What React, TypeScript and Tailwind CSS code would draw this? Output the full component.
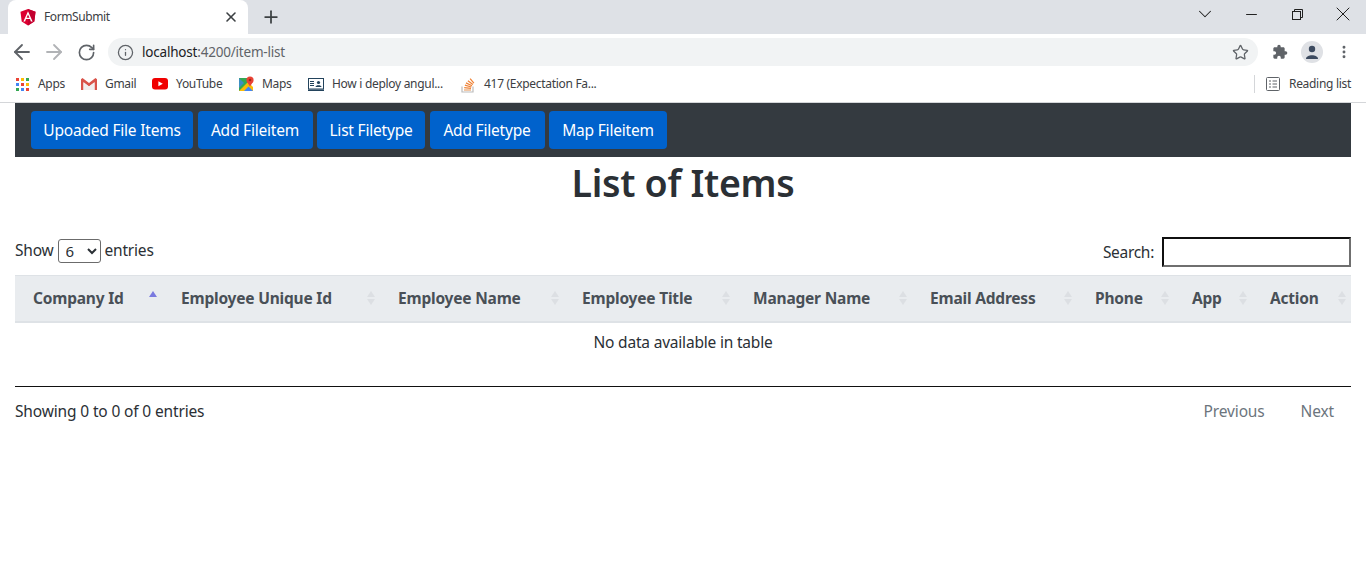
import { ArrowLeft, ArrowRight, Info, Minus, Plus, RotateCw, Star, X, ChevronDown, MoreVertical } from "lucide-react";

const NAV_ITEMS = [
  { label: "Upoaded File Items", w: "w-[162px]" },
  { label: "Add Fileitem", w: "w-[115px]" },
  { label: "List Filetype", w: "w-[108px]" },
  { label: "Add Filetype", w: "w-[115px]" },
  { label: "Map Fileitem", w: "w-[118px]" },
];

const COLUMNS = [
  { label: "Company Id", w: "w-[148px]", active: true },
  { label: "Employee Unique Id", w: "w-[217px]" },
  { label: "Employee Name", w: "w-[184px]" },
  { label: "Employee Title", w: "w-[171px]" },
  { label: "Manager Name", w: "w-[177px]" },
  { label: "Email Address", w: "w-[165px]" },
  { label: "Phone", w: "w-[97px]" },
  { label: "App", w: "w-[78px]" },
  { label: "Action", w: "w-[99px]" },
];

function AngularIcon() {
  return (
    <svg width="16" height="17" viewBox="0 0 16 17">
      <path d="M8 0 L15.5 2.7 L14.3 12.6 L8 16.5 L1.7 12.6 L.5 2.7Z" fill="#dd0031" />
      <path d="M8 0 L15.5 2.7 L14.3 12.6 L8 16.5Z" fill="#c3002f" />
      <path d="M8 2.2 L3.4 12.4 H5.1 L6 10.1 H10 L10.9 12.4 H12.6Z M8 5.6 L9.4 8.8 H6.6Z" fill="#fff" fillRule="evenodd" />
    </svg>
  );
}

function AppsIcon() {
  const colors = ["#ea4335", "#fbbc05", "#34a853", "#4285f4", "#ea4335", "#fbbc05", "#34a853", "#4285f4", "#ea4335"];
  return (
    <div className="grid grid-cols-3 gap-[2px] w-[13px]">
      {colors.map((c, i) => (
        <svg key={i} width="3" height="3"><rect width="3" height="3" fill={c} /></svg>
      ))}
    </div>
  );
}

function GmailIcon() {
  return (
    <svg width="16" height="12" viewBox="0 0 16 12">
      <path d="M0 1.2 L1.5 0 L8 5 L14.5 0 L16 1.2 V12 H13.5 V4.2 L8 8.4 L2.5 4.2 V12 H0Z" fill="#d9534a" />
      <path d="M2.5 4.2 L8 8.4 L13.5 4.2 V12 H2.5Z" fill="#f1eeee" />
    </svg>
  );
}

function YoutubeIcon() {
  return (
    <svg width="16" height="12" viewBox="0 0 16 12">
      <rect width="16" height="11.5" rx="3" fill="#f00000" />
      <path d="M6.4 3.2 L10.8 5.75 L6.4 8.3Z" fill="#fff" />
    </svg>
  );
}

function MapsIcon() {
  return (
    <svg width="15" height="16" viewBox="0 0 15 16">
      <path d="M0 2h9v13H0z" fill="#34a853" />
      <path d="M0 15 L9 6 L14 11 V15Z" fill="#fbbc05" />
      <path d="M5 15 L9.5 10.5 L14 15Z" fill="#4285f4" />
      <path d="M0 2 L5 7 L0 12Z" fill="#4285f4" opacity=".7" />
      <circle cx="11" cy="4" r="3.6" fill="#ea4335" />
      <circle cx="11" cy="4" r="1.3" fill="#a52714" />
      <path d="M8.4 6.4 L11 10.5 L13.6 6.4Z" fill="#ea4335" />
    </svg>
  );
}

function DeployIcon() {
  return (
    <svg width="16" height="13" viewBox="0 0 16 13">
      <rect x=".5" y=".5" width="15" height="10.5" fill="#fff" stroke="#23435c" />
      <rect x="2" y="3" width="4" height="1" fill="#23435c" />
      <rect x="2" y="5" width="4" height="1" fill="#23435c" />
      <rect x="2" y="7" width="4" height="1" fill="#23435c" />
      <circle cx="10.5" cy="4.5" r="1.6" fill="#23435c" />
      <path d="M7.5 9 C7.5 6.5 13.5 6.5 13.5 9Z" fill="#23435c" />
      <rect y="11.5" width="16" height="1.5" fill="#23435c" />
    </svg>
  );
}

function StackIcon() {
  return (
    <svg width="14" height="17" viewBox="0 0 14 17" fill="none">
      <path d="M1 10.5V16H12V10.5" stroke="#bcbbbb" strokeWidth="1.2" />
      <path d="M3 14H10" stroke="#e8a26b" strokeWidth="1.2" />
      <path d="M3.2 11.6L10 12.4M3.9 9.2L10.4 11M5 6.9L11 9.7M6.9 4.7L11.9 8.5M9.1 2.6L12.9 7.2" stroke="#ef8236" strokeWidth="1.2" />
    </svg>
  );
}

function PuzzleIcon() {
  return (
    <svg width="16" height="16" viewBox="0 0 24 24" fill="#5f6368">
      <path d="M20.5 11H19V7c0-1.1-.9-2-2-2h-4V3.5a2.5 2.5 0 0 0-5 0V5H4c-1.1 0-2 .9-2 2v3.8h1.5a2.7 2.7 0 0 1 0 5.4H2V20c0 1.1.9 2 2 2h3.8v-1.5a2.7 2.7 0 0 1 5.4 0V22H17c1.1 0 2-.9 2-2v-4h1.5a2.5 2.5 0 0 0 0-5z" />
    </svg>
  );
}

function ReadingListIcon() {
  return (
    <svg width="14" height="14" viewBox="0 0 14 14" fill="none" stroke="#5f6368">
      <rect x=".5" y=".5" width="13" height="13" rx="1" />
      <path d="M3 4h2M3 7h2M3 10h2M6.5 4H11M6.5 7H11M6.5 10H11" />
    </svg>
  );
}

function RestoreIcon() {
  return (
    <svg width="11" height="11" viewBox="0 0 11 11" fill="none" stroke="#1f1f1f">
      <rect x=".5" y="2.5" width="8" height="8" />
      <path d="M2.5 2.5V.5H10.5V8.5H8.5" />
    </svg>
  );
}

function SortArrows({ active }: { active?: boolean }) {
  return (
    <svg width="8" height="14" viewBox="0 0 8 14" className={active ? "shrink-0 mr-[1.5px]" : "shrink-0"}>
      <path d="M4 0 L8 6 H0Z" fill={active ? "#7a7adf" : "#dcdfe3"} />
      {!active && <path d="M4 14 L8 8 H0Z" fill="#dcdfe3" />}
    </svg>
  );
}

function Bookmark({ icon, label, w }: { icon: React.ReactNode; label: string; w: string }) {
  return (
    <div className={`flex items-center gap-[8px] ${w}`}>
      <span className="flex w-[16px] justify-center shrink-0">{icon}</span>
      <span>{label}</span>
    </div>
  );
}

export default function App() {
  return (
    <div className="h-[576px] bg-white overflow-hidden text-[#2b3035] font-['Noto_Sans',sans-serif]">
      {/* tab strip */}
      <div className="h-[34px] bg-[#dee1e6] flex items-end pl-[8px]">
        <div className="w-[240px] h-[34px] bg-white rounded-t-[8px] flex items-center pl-[12px] pr-[9px] text-[12px] text-[#3c4043]">
          <AngularIcon />
          <span className="ml-[8px] flex-1 tracking-[-0.4px]">FormSubmit</span>
          <X size={16} strokeWidth={2.4} color="#3c4043" />
        </div>
        <div className="h-[34px] flex items-center ml-[12.5px]">
          <Plus size={20} strokeWidth={2.1} color="#3c4043" />
        </div>
        <div className="ml-auto h-[34px] flex items-center pb-[6px] text-[#1f1f1f]">
          <ChevronDown size={22} strokeWidth={1.1} className="mr-[26.5px]" />
          <Minus size={17} strokeWidth={1.4} className="mr-[32px]" />
          <RestoreIcon />
          <X size={24} strokeWidth={1} className="ml-[28.5px] mr-[11px]" />
        </div>
      </div>

      {/* toolbar */}
      <div className="h-[36px] flex items-center pl-[10px] bg-white">
        <ArrowLeft size={24} color="#5f6368" strokeWidth={1.8} />
        <ArrowRight size={24} color="#b1b3b6" strokeWidth={1.8} className="ml-[8px]" />
        <span className="ml-[8px] flex w-[24px] justify-center">
          <RotateCw size={19} color="#5f6368" strokeWidth={2.1} />
        </span>
        <div className="ml-[10px] w-[1150px] h-[28px] rounded-full bg-[#f1f3f4] flex items-center pl-[9px] pr-[9px] text-[13.5px] text-[#5f6368]">
          <Info size={17} color="#5f6368" strokeWidth={1.8} />
          <span className="ml-[8px] tracking-[-0.2px]">
            <span className="text-[#202124]">localhost</span>:4200/item-list
          </span>
          <Star size={17} color="#5f6368" strokeWidth={1.8} className="ml-auto" />
        </div>
        <span className="ml-[14px]"><PuzzleIcon /></span>
        <div className="ml-[13px] w-[22px] h-[22px] rounded-full bg-[#dfe1e5] flex items-center justify-center">
          <svg width="14" height="14" viewBox="0 0 14 14" fill="#3c4a5f">
            <circle cx="7" cy="4" r="3.2" />
            <path d="M1 14C1 9 13 9 13 14Z" />
          </svg>
        </div>
        <MoreVertical size={16} color="#5f6368" strokeWidth={2.4} className="ml-[13px]" />
      </div>

      {/* bookmarks */}
      <div className="h-[33px] flex items-center pl-[14px] pr-[15px] pb-[4px] text-[12px] text-[#3c4043] border-b border-[#d4d6d9] tracking-[-0.3px]">
        <Bookmark icon={<AppsIcon />} label="Apps" w="w-[67px]" />
        <Bookmark icon={<GmailIcon />} label="Gmail" w="w-[71px]" />
        <Bookmark icon={<YoutubeIcon />} label="YouTube" w="w-[86px]" />
        <Bookmark icon={<MapsIcon />} label="Maps" w="w-[70px]" />
        <Bookmark icon={<DeployIcon />} label="How i deploy angul..." w="w-[152px]" />
        <Bookmark icon={<StackIcon />} label="417 (Expectation Fa..." w="w-[150px]" />
        <div className="ml-auto flex items-center">
          <div className="w-px h-[18px] bg-[#d4d6d9] mr-[11px]" />
          <ReadingListIcon />
          <span className="ml-[9px]">Reading list</span>
        </div>
      </div>

      {/* page */}
      <div className="px-[15px]">
        <nav className="h-[54px] bg-[#343a40] flex items-center pl-[16px] gap-[4.5px]">
          {NAV_ITEMS.map((item) => (
            <button key={item.label} className={`${item.w} h-[38px] pt-[1px] rounded-[4px] bg-[#0062cc] text-white text-[15.5px] tracking-[-0.2px] text-center`}>
              {item.label}
            </button>
          ))}
        </nav>

        <h1 className="text-center text-[37.5px] font-semibold leading-[48px] mt-[2px] tracking-[-0.3px]">List of Items</h1>

        <div className="flex items-start justify-between mt-[31px] h-[37px] text-[15.5px] tracking-[-0.2px]">
          <div className="flex items-center h-[26px]">
            <span>Show</span>
            <select className="ml-[4px] mr-[4px] w-[43px] h-[24px] border border-[#6b6b6b] rounded-[3px] bg-white pl-[3px] text-[15px]" defaultValue="6">
              <option>6</option>
            </select>
            <span>entries</span>
          </div>
          <div className="flex items-center mt-[-1px]">
            <span className="mr-[8px] tracking-[-0.3px] mt-[1px]">Search:</span>
            <div className="w-[189px] h-[30px] border-2 border-t-[#101010] border-l-[#101010] border-r-[#6f6f6f] border-b-[#6f6f6f] bg-white" />
          </div>
        </div>

        <table className="w-full table-fixed border-collapse text-[15.5px]">
          <thead>
            <tr className="h-[46px] bg-[#e9ecef] text-[#495057] border-t border-[#dee2e6] border-b-2">
              {COLUMNS.map((col) => (
                <th key={col.label} className={`${col.w} text-left font-bold pl-[18px] pr-[5px] tracking-[-0.2px]`}>
                  <div className="flex items-center justify-between whitespace-nowrap">
                    <span>{col.label}</span>
                    <SortArrows active={col.active} />
                  </div>
                </th>
              ))}
            </tr>
          </thead>
          <tbody>
            <tr className="h-[65px] border-b border-[#111]">
              <td colSpan={9} className="text-center align-top pt-[8px] tracking-[-0.2px]">No data available in table</td>
            </tr>
          </tbody>
        </table>

        <div className="flex items-center justify-between mt-[13px] text-[15.5px] tracking-[-0.15px]">
          <span>Showing 0 to 0 of 0 entries</span>
          <div className="flex text-[#6c757d] pr-[17px] gap-[36px]">
            <span>Previous</span>
            <span>Next</span>
          </div>
        </div>
      </div>
    </div>
  );
}
